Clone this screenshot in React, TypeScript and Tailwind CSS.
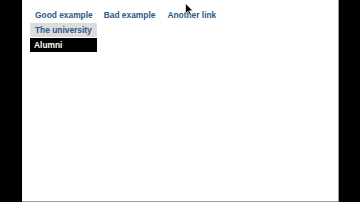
import React from 'react';

const links = ['Good example', 'Bad example', 'Another link'];

export default function App() {
  return (
    <div className="flex h-[202px] w-[360px] bg-black font-['Liberation_Sans',Arial,sans-serif]">
      <div className="relative ml-[22px] h-[202px] w-[317px] border-r border-b border-[#9a9a9a] bg-white">
        {/* top nav */}
        <nav className="flex pl-[8px] pt-[9px]">
          {links.map((label, i) => (
            <div key={label} className="relative">
              <a
                href="#"
                className="block px-[5px] text-[8.4px] leading-[12px] font-bold text-[#2d5886]"
                style={{ marginRight: i === 0 ? 1 : 2 }}
              >
                {label}
              </a>
              {i === 0 && (
                <ul className="w-[67px] pt-[2px]">
                  <li className="h-[14px] bg-[#dcdcdc] px-[5px] text-[8.4px] leading-[14px] font-bold text-[#2d5886]">
                    The university
                  </li>
                  <li className="mt-[1px] h-[14px] bg-black px-[4px] text-[8.4px] leading-[14px] font-bold text-white">
                    Alumni
                  </li>
                </ul>
              )}
            </div>
          ))}
        </nav>

        {/* mouse pointer */}
        <svg
          className="absolute left-[163px] top-[3px]"
          width="9"
          height="13"
          viewBox="0 0 9 13"
        >
          <path d="M0.5 0.5 L0.5 10.5 L3 8.2 L4.8 12.2 L6.2 11.6 L4.4 7.7 L7.8 7.7 Z" fill="#000" stroke="#fff" strokeWidth="0.6" />
        </svg>
      </div>
    </div>
  );
}
